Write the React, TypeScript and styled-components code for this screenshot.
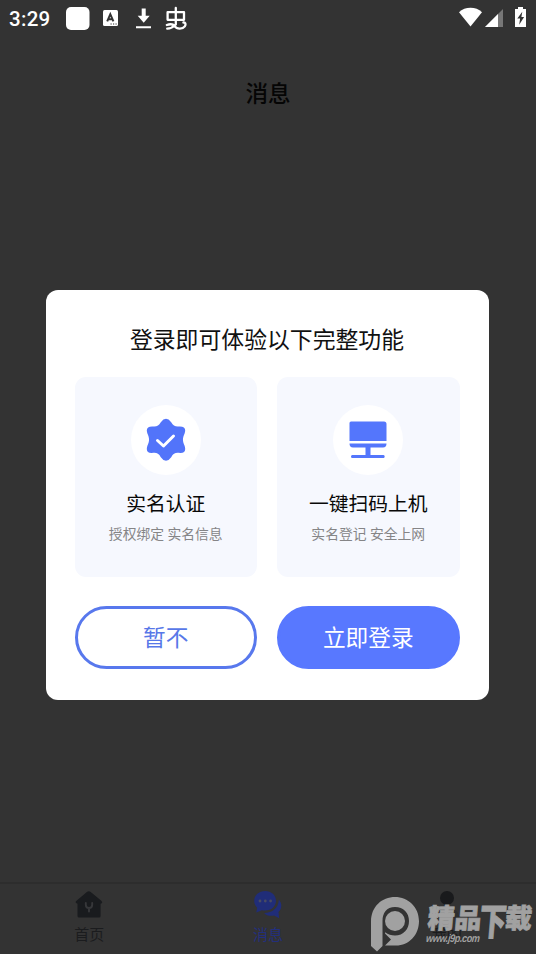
import React from "react";
import styled, { createGlobalStyle } from "styled-components";

const Global = createGlobalStyle`
  * { box-sizing: border-box; }
  body { margin: 0; background: #333; }
  button { font: inherit; padding: 0; cursor: pointer; }
`;

const Screen = styled.div`
  position: relative;
  display: flex;
  flex-direction: column;
  width: 536px;
  height: 954px;
  overflow: hidden;
  background: #333;
  font-family: Roboto, "Noto Sans CJK SC", sans-serif;
`;

const StatusBar = styled.header`
  display: flex;
  align-items: center;
  justify-content: space-between;
  height: 37px;
  padding: 0 9px;
  color: #fff;
`;

const Clock = styled.span`
  width: 57px;
  font-size: 20.5px;
  font-weight: 500;
  line-height: 37px;
  letter-spacing: 0.3px;
  padding-top: 1px;
`;

const StatusGroup = styled.div`
  display: flex;
  align-items: center;
  svg { display: block; }
`;

const Heading = styled.h1`
  margin: 0;
  padding-top: 41px;
  flex: 1;
  text-align: center;
  font-size: 22.6px;
  line-height: 34px;
  font-weight: 500;
  color: #050505;
`;

const TabBar = styled.nav`
  display: grid;
  grid-template-columns: repeat(3, 1fr);
  height: 72px;
  border-top: 2px solid #2d2d2d;
`;

const Tab = styled.div<{ $active?: boolean }>`
  display: flex;
  flex-direction: column;
  align-items: center;
  padding-top: 7px;
  font-size: 15px;
  line-height: 22px;
  color: ${(p) => (p.$active ? "#232f7c" : "#1b1c1e")};
  svg { display: block; margin-bottom: 5px; }
`;

const Overlay = styled.div`
  position: absolute;
  inset: 0;
  display: flex;
  flex-direction: column;
  align-items: center;
  padding: 290px 2px 0 0;
`;

const Dialog = styled.section`
  width: 443px;
  height: 409.5px;
  padding: 33px 29px 0;
  border-radius: 12px;
  background: #fff;
`;

const DialogTitle = styled.h2`
  margin: 0 0 18px;
  text-align: center;
  font-size: 22.85px;
  line-height: 36px;
  font-weight: 400;
  color: #111;
`;

const Pair = styled.div`
  display: grid;
  grid-template-columns: 1fr 1fr;
  column-gap: 20px;
`;

const Feature = styled.article`
  display: flex;
  flex-direction: column;
  align-items: center;
  height: 200px;
  margin-bottom: 29px;
  padding-top: 28px;
  border-radius: 11px;
  background: #f6f8fe;
`;

const Disc = styled.div`
  display: grid;
  place-items: center;
  width: 70px;
  height: 70px;
  border-radius: 50%;
  background: #fff;
`;

const FeatureName = styled.h3`
  margin: 15px 0 0;
  font-size: 19.8px;
  line-height: 30px;
  font-weight: 400;
  color: #080808;
`;

const FeatureNote = styled.p`
  margin: 3px 0 0;
  font-size: 13.8px;
  line-height: 22px;
  color: #858587;
  white-space: nowrap;
`;

const Button = styled.button<{ $filled?: boolean }>`
  height: 63px;
  border: 3px solid ${(p) => (p.$filled ? "#5878ff" : "#5878ed")};
  border-radius: 32px;
  background: ${(p) => (p.$filled ? "#5878ff" : "#fff")};
  color: ${(p) => (p.$filled ? "#fff" : "#5878e8")};
  font-size: 22.7px;
  line-height: 55px;
  padding-top: 2px;
`;

const Watermark = styled.div`
  position: absolute;
  left: 370px;
  top: 896px;
  display: flex;
  color: #a1a1a1;
`;

const Brand = styled.div`
  padding: 9px 0 0 6px;
  transform: skewX(-5deg);
  transform-origin: 0 100%;
  white-space: nowrap;
`;

const BrandName = styled.div`
  display: flex;
  height: 28px;
  font-size: 27px;
  line-height: 29px;
  font-weight: 900;
  letter-spacing: -0.3px;
  -webkit-text-stroke: 0.7px #a1a1a1;
`;

const TallGlyph = styled.span`
  transform: scaleY(1.38);
  transform-origin: 0 12%;
  margin: 0 -1.5px;
`;

const BrandUrl = styled.div`
  width: max-content;
  font: italic 700 11px/11px "Liberation Sans", sans-serif;
  letter-spacing: -0.5px;
  transform: scaleX(0.83);
  transform-origin: 0 50%;
`;

const NotificationIcons = () => (
  <svg width="122" height="37" viewBox="66 0 122 37" fill="none">
    <rect x="66" y="7" width="23.5" height="23" rx="5" fill="#fff" />
    <rect x="103" y="10" width="15" height="16" rx="1.5" fill="#fff" />
    <path d="M107.2 21.3 110.3 14.2 113.4 21.3M108.3 19.2H112.3" stroke="#333" strokeWidth="2" />
    <path d="M110.5 24h1.2M113 24h1.2M115.5 24h1.2" stroke="#333" strokeWidth="1.2" />
    <path d="M141.7 8.5h4v7.3h4l-6 7-6-7h4zM136 26.2h15v2h-15z" fill="#fff" />
    <path
      d="M175.8 8v16.5M167.6 12.2h16.4v7.6h-16.4zM166.8 25c3.8-1.3 6.4-.8 7.8 1.2 2.4 3.4 8.2 3 10.2.2 1.5-2.2.5-4.2-1.4-3.9M167.2 28.7c4.3-.2 6-1.6 8.6-4.2"
      stroke="#fff"
      strokeWidth="2.3"
      strokeLinecap="round"
      strokeLinejoin="round"
    />
  </svg>
);

const SystemIcons = () => (
  <svg width="70" height="37" viewBox="457 0 70 37">
    <path d="M459 12.2C465 6.3 476 6.3 482 12.2L470.5 26.5Z" fill="#fff" />
    <path d="M503 9v18h-18z" fill="#777" />
    <path d="M498 14v13h-13z" fill="#fff" />
    <path d="M518 7h5v2h3v18h-11V9h3z" fill="#fff" />
    <path d="m522.3 11.8-5 6.7h2.8l-.9 6.2 4.9-7.8h-2.7z" fill="#333" />
  </svg>
);

const VerifiedIcon = () => (
  <svg width="40" height="44" viewBox="0 0 40 44">
    <path
      d="M14.8 4.2Q20-2.6 25.2 4.2C27.2 7.7 29 8.7 32.5 8.5Q41.2 7.8 38.6 15.4C36.4 20 36.4 23 38.6 27.7Q41.2 36 32.5 34.8C29 34.6 27.2 35.7 25.2 39.2Q20 46.5 14.8 39.2C12.8 35.7 11 34.6 7.5 34.8Q-1.2 36 1.4 27.7C3.6 23 3.6 20 1.4 15.4Q-1.2 7.8 7.5 8.5C11 8.7 12.8 7.7 14.8 4.2Z"
      fill="#5274fa"
    />
    <path d="m11.5 22.5 6 5.5 10-10" fill="none" stroke="#fff" strokeWidth="3" strokeLinecap="round" strokeLinejoin="round" />
  </svg>
);

const ComputerIcon = () => (
  <svg width="38" height="38" viewBox="0 0 38 38" fill="#5476fc">
    <path d="M2 .5h33q2.5 0 2.5 2.5v17H.5V2Q.5.5 2 .5zM.5 22.5h37q0 4-3.5 4H21.5v7.5h13q1.2 0 1.2 1.6t-1.2 1.4H3.2Q2 37 2 35.5T3.2 34h13.3v-7.5H4q-3.5 0-3.5-4z" />
  </svg>
);

const HomeIcon = () => (
  <svg width="28" height="28" viewBox="0 0 28 28">
    <path d="M12.2.8q1.6-1.2 3.2 0l10.9 9q2.2 2.2-.7 2.9V25q0 1.5-1.5 1.5H4Q2.5 26.5 2.5 25V12.7q-3.2-.7-1-2.9z" fill="#191b1e" />
    <path d="M10.8 12v1.7q0 3.3 3.2 3.3t3.2-3.3V12M14 17v3.6" fill="none" stroke="#36373a" strokeWidth="1.9" strokeLinecap="round" />
  </svg>
);

const ChatIcon = () => (
  <svg width="28" height="28" viewBox="0 0 28 28" fill="#202d78">
    <path d="M11.2 0C17.5 0 22 4.3 22 9.8S17.5 19.6 11.2 19.6q-1.8 0-3.4-.4L2.3 21.6l.9-4.9C1.3 15 .2 12.6.2 9.8.2 4.3 4.9 0 11.2 0z" />
    <path d="M24.8 8.5c3.6 4 3.1 9.3-.3 12.4l.7 6.4-5.1-2.8c-4 .9-7.8 0-10-2.6C18.2 22 24.6 17 24.8 8.5z" />
    <g fill="#484b62">
      <circle cx="6" cy="10" r="1.4" />
      <circle cx="11.3" cy="10" r="1.4" />
      <circle cx="16.6" cy="10" r="1.4" />
    </g>
  </svg>
);

const ProfileIcon = () => (
  <svg width="28" height="28" viewBox="0 0 28 28">
    <circle cx="14" cy="7" r="7" fill="#191a1c" />
    <path d="M2 27q0-10 12-10t12 10z" fill="#2d2e2f" />
  </svg>
);

const BrandLogo = () => (
  <svg width="49" height="56" viewBox="0 0 49 56">
    <path
      d="M1 25.5C1 10.5 12 1 25 1s24 10 24 24-10 24.5-23 24.5H15l6-6-6-6 .2-1.3c3 2.4 6 3.3 9.8 3.3 8.5 0 14-6.3 14-14.5S33.5 11 25 11 12.5 17 12.5 25v25L7 55.5 1 50z"
      fill="#a1a1a1"
    />
    <circle cx="25" cy="25" r="10" fill="#a1a1a1" />
  </svg>
);

const features = [
  { name: "实名认证", note: "授权绑定 实名信息", icon: <VerifiedIcon /> },
  { name: "一键扫码上机", note: "实名登记 安全上网", icon: <ComputerIcon /> },
];

export default function App() {
  return (
    <Screen>
      <Global />
      <StatusBar>
        <StatusGroup>
          <Clock>3:29</Clock>
          <NotificationIcons />
        </StatusGroup>
        <StatusGroup>
          <SystemIcons />
        </StatusGroup>
      </StatusBar>
      <Heading>消息</Heading>
      <TabBar>
        <Tab><HomeIcon />首页</Tab>
        <Tab $active><ChatIcon />消息</Tab>
        <Tab><ProfileIcon />我的</Tab>
      </TabBar>
      <Overlay>
        <Dialog role="dialog">
          <DialogTitle>登录即可体验以下完整功能</DialogTitle>
          <Pair>
            {features.map((f) => (
              <Feature key={f.name}>
                <Disc>{f.icon}</Disc>
                <FeatureName>{f.name}</FeatureName>
                <FeatureNote>{f.note}</FeatureNote>
              </Feature>
            ))}
          </Pair>
          <Pair>
            <Button>暂不</Button>
            <Button $filled>立即登录</Button>
          </Pair>
        </Dialog>
      </Overlay>
      <Watermark>
        <BrandLogo />
        <Brand>
          <BrandName>精品<TallGlyph>下</TallGlyph>载</BrandName>
          <BrandUrl>www.j9p.com</BrandUrl>
        </Brand>
      </Watermark>
    </Screen>
  );
}
